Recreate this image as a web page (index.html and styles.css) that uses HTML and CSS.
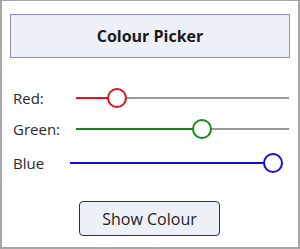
FILE: index.html
```html
<!DOCTYPE html>
<html lang="en">
<head>
    <meta charset="UTF-8">
    <title>Colour Picker</title>
    <link rel="stylesheet" href="styles.css">
</head>
<body>
    <div class="frame">
        <div class="title-box">Colour Picker</div>

        <div class="sliders">
            <div class="row row-red">
                <label class="label">Red:</label>
                <div class="slider">
                    <div class="track"></div>
                    <div class="fill" style="width: 41px"></div>
                    <div class="thumb" style="left: 41px"></div>
                </div>
            </div>
            <div class="row row-green">
                <label class="label">Green:</label>
                <div class="slider">
                    <div class="track"></div>
                    <div class="fill" style="width: 126px"></div>
                    <div class="thumb" style="left: 126px"></div>
                </div>
            </div>
            <div class="row row-blue">
                <label class="label">Blue</label>
                <div class="slider">
                    <div class="track"></div>
                    <div class="fill" style="width: 203px"></div>
                    <div class="thumb" style="left: 203px"></div>
                </div>
            </div>
        </div>

        <div class="actions">
            <button class="show-btn">Show Colour</button>
        </div>
    </div>
</body>
</html>
```

FILE: styles.css
```css
html, body {
    margin: 0;
    padding: 0;
    background: #ffffff;
}
body {
    font-family: "Open Sans", "Noto Sans", sans-serif;
    color: #222;
}
.frame {
    box-sizing: border-box;
    width: 300px;
    height: 249px;
    border: 2px solid #a6a6a6;
    border-top-width: 1px;
    padding: 13px 8px 0 8px;
}
.title-box {
    height: 42px;
    border: 1px solid #8e8ec2;
    background: #eef0f7;
    display: flex;
    justify-content: center;
    align-items: center;
    font-size: 16px;
    font-weight: bold;
    color: #1a1a1a;
}
.sliders {
    margin-top: 30px;
    padding-left: 3px;
    padding-right: 1px;
}
.row {
    display: flex;
    align-items: center;
    height: 20px;
}
.row-green {
    margin-top: 11px;
}
.row-blue {
    margin-top: 14px;
}
.label {
    font-size: 15px;
    color: #2a2a2a;
    width: 63px;
}
.row-blue .label {
    width: 57px;
}
.slider {
    flex: 1;
    position: relative;
    height: 20px;
}
.row-blue .slider {
    margin-right: 6px;
}
.track, .fill {
    position: absolute;
    left: 0;
    top: 9px;
    height: 2px;
}
.track {
    right: 0;
    background: #999;
}
.thumb {
    position: absolute;
    top: 0;
    width: 16px;
    height: 16px;
    margin-left: -10px;
    border: 2px solid;
    border-radius: 50%;
    background: #fff;
}
.row-red .fill { background: #e0141b; }
.row-red .thumb { border-color: #e0141b; }
.row-green .fill { background: #168a16; }
.row-green .thumb { border-color: #168a16; }
.row-blue .fill { background: #1010d8; }
.row-blue .thumb { border-color: #1010d8; }
.actions {
    display: flex;
    justify-content: center;
    margin-top: 28px;
}
.show-btn {
    width: 141px;
    height: 35px;
    border: 1px solid #333;
    border-radius: 4px;
    background: #eef0f7;
    font-family: "Open Sans", "Noto Sans", sans-serif;
    font-size: 16px;
    color: #222;
    margin-left: -1px;
}
```
